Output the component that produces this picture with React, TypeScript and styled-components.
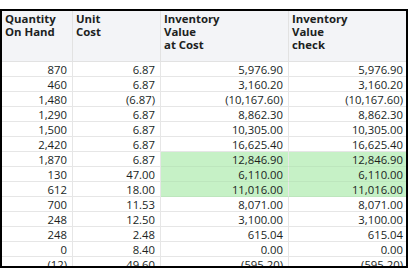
import React from "react";
import styled, { createGlobalStyle } from "styled-components";

const GlobalStyle = createGlobalStyle`
  html, body {
    margin: 0;
    padding: 0;
    background: #ffffff;
  }
  body {
    padding-top: 9px;
    font-family: "Open Sans", "Liberation Sans", sans-serif;
    color: #201f1e;
  }
`;

const Frame = styled.div`
  width: 408px;
  height: 259px;
  box-sizing: border-box;
  border: 2px solid #000000;
  overflow: hidden;
`;

const Grid = styled.div`
  display: grid;
  grid-template-columns: 71px 88px 128px 117px;
  grid-template-rows: 51px;
  grid-auto-rows: 15px;
`;

const HeaderCell = styled.div<{ $last?: boolean }>`
  box-sizing: border-box;
  background: #f3f4f7;
  border-bottom: 1px solid #e2e2e2;
  border-right: ${(p) => (p.$last ? "none" : "1px solid #e2e2e2")};
  padding: 1px 3px 0 3px;
  font-size: 11.4px;
  font-weight: 700;
  line-height: 13px;
  white-space: pre-line;
`;

const Cell = styled.div<{ $last?: boolean; $good?: boolean }>`
  box-sizing: border-box;
  background: ${(p) => (p.$good ? "#c6f1c6" : "#ffffff")};
  border-bottom: 1px solid ${(p) => (p.$good ? "#bde6bd" : "#e6e6e6")};
  border-right: ${(p) => (p.$last ? "none" : "1px solid #e6e6e6")};
  padding: 0 ${(p) => (p.$last ? "3px" : "5px")} 0 0;
  text-align: right;
  font-size: 11.3px;
  line-height: 15px;
  white-space: nowrap;
`;

const headers = [
  "Quantity\nOn Hand",
  "Unit\nCost",
  "Inventory\nValue\nat Cost",
  "Inventory\nValue\ncheck",
];

const rows: [string, string, string, boolean][] = [
  ["870", "6.87", "5,976.90", false],
  ["460", "6.87", "3,160.20", false],
  ["1,480", "(6.87)", "(10,167.60)", false],
  ["1,290", "6.87", "8,862.30", false],
  ["1,500", "6.87", "10,305.00", false],
  ["2,420", "6.87", "16,625.40", false],
  ["1,870", "6.87", "12,846.90", true],
  ["130", "47.00", "6,110.00", true],
  ["612", "18.00", "11,016.00", true],
  ["700", "11.53", "8,071.00", false],
  ["248", "12.50", "3,100.00", false],
  ["248", "2.48", "615.04", false],
  ["0", "8.40", "0.00", false],
  ["(12)", "49.60", "(595.20)", false],
];

export default function App() {
  return (
    <>
      <GlobalStyle />
      <Frame>
        <Grid>
          {headers.map((h, i) => (
            <HeaderCell key={h} $last={i === headers.length - 1}>
              {h}
            </HeaderCell>
          ))}
          {rows.map(([qty, cost, value, good], r) => (
            <React.Fragment key={r}>
              <Cell>{qty}</Cell>
              <Cell>{cost}</Cell>
              <Cell $good={good}>{value}</Cell>
              <Cell $good={good} $last>
                {value}
              </Cell>
            </React.Fragment>
          ))}
        </Grid>
      </Frame>
    </>
  );
}
